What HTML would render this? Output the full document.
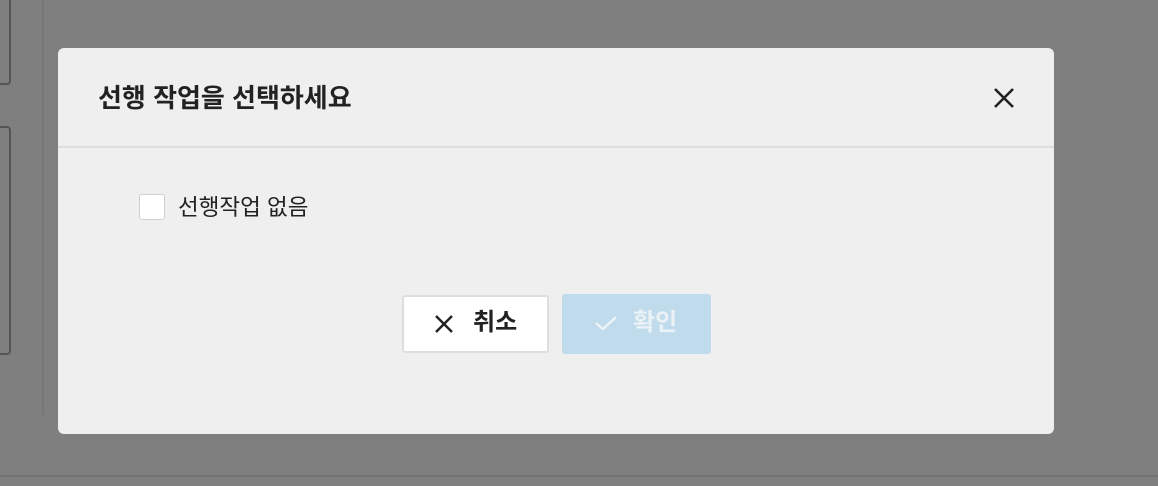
<!DOCTYPE html>
<html><head><meta charset="utf-8"><style>
html,body{margin:0;padding:0;width:1158px;height:486px;overflow:hidden;background:#7f7f7f;font-family:"Liberation Sans","Noto Sans CJK KR",sans-serif;position:relative}
.a{position:absolute;box-sizing:border-box}
</style></head><body>
<div class="a" style="left:0;top:0;width:44px;height:415px;border-right:2px solid #767676"></div>
<div class="a" style="left:-10px;top:-10px;width:21px;height:95px;border:2px solid #555;border-radius:4px"></div>
<div class="a" style="left:-10px;top:126px;width:21px;height:229px;border:2px solid #555;border-radius:4px"></div>
<div class="a" style="left:0;top:475px;width:1158px;height:2px;background:#727272"></div>
<div class="a" style="left:58px;top:48px;width:996px;height:386px;background:#efefef;border-radius:6px">
 <div class="a" style="left:0;top:0;width:996px;height:100px;border-bottom:2px solid #dedede"></div>
 <div class="a" style="left:40px;top:31px;font-size:26px;font-weight:bold;color:#222;line-height:38px">선행 작업을 선택하세요</div>
 <svg class="a" style="left:935px;top:39px" width="22" height="22" viewBox="0 0 22 22"><path d="M2 2L20 20M20 2L2 20" stroke="#222" stroke-width="2.6"/></svg>
 <div class="a" style="left:81px;top:146px;width:26px;height:26px;background:#fff;border:1px solid #d0d0d0;border-radius:3px"></div>
 <div class="a" style="left:120px;top:144px;font-size:22.5px;color:#222;line-height:32px">선행작업 없음</div>
 <div class="a" style="left:344px;top:247px;width:147px;height:58px;background:#fff;border:2px solid #dedede;border-radius:3px"></div>
 <svg class="a" style="left:377px;top:267px" width="18" height="18" viewBox="0 0 18 18"><path d="M1 1L17 17M17 1L1 17" stroke="#222" stroke-width="2.4"/></svg>
 <div class="a" style="left:415px;top:259px;font-size:24px;font-weight:bold;color:#222;line-height:32px">취소</div>
 <div class="a" style="left:504px;top:246px;width:149px;height:60px;background:#c0dbeb;border-radius:3px"></div>
 <svg class="a" style="left:536px;top:266px" width="24" height="18" viewBox="0 0 24 18"><path d="M2 9L9 15L22 3" stroke="#eef4f8" stroke-width="2.4" fill="none"/></svg>
 <div class="a" style="left:575px;top:259px;font-size:24px;font-weight:bold;color:#eaf2f7;line-height:32px">확인</div>
</div>
</body></html>
